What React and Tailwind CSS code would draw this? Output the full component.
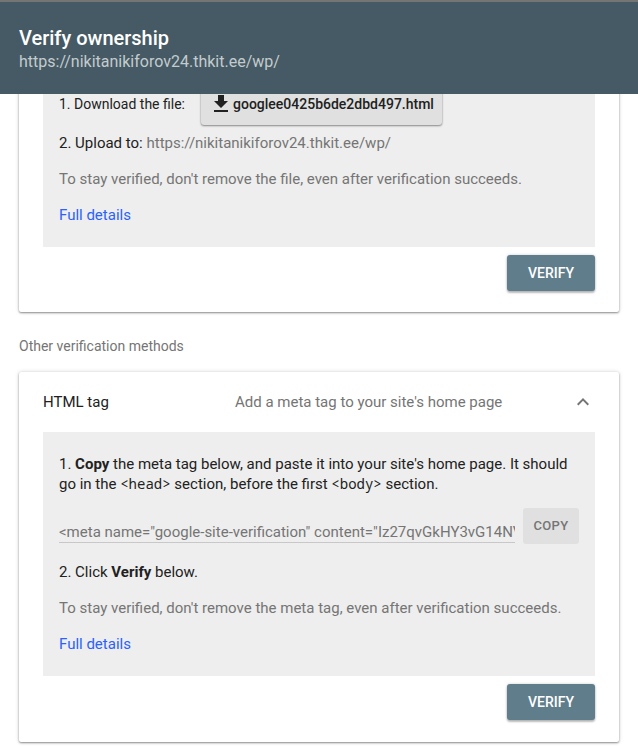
const CardFooter = () => (
  <div className="flex justify-end pt-2">
    <button
      type="button"
      className="h-9 w-22 rounded-[3px] bg-[#607d8b] pb-px text-sm font-medium text-white shadow-[0_2px_2px_rgba(0,0,0,0.24),0_0_3px_rgba(0,0,0,0.2)]"
    >
      VERIFY
    </button>
  </div>
);

const Card = ({ children }) => (
  <section className="rounded-[2px] bg-white px-6 shadow-[0_1px_2px_rgba(0,0,0,0.4),0_0_4px_rgba(0,0,0,0.16)]">
    {children}
  </section>
);

const DetailsLink = () => (
  <a href="#details" className="self-start text-[#2962ff]">
    Full details
  </a>
);

const Code = ({ children }) => (
  <code className="font-['Noto_Sans_Mono','DejaVu_Sans_Mono',monospace] text-sm leading-none">{children}</code>
);

const DownloadIcon = () => (
  <svg viewBox="0 0 14 17" className="h-[17px] w-[14px] shrink-0" fill="currentColor" aria-hidden="true">
    <path d="M4 0h6v6h4l-7 7-7-7h4zM0 15h14v2H0z" />
  </svg>
);

const ChevronUp = () => (
  <svg viewBox="0 0 24 24" className="size-6" fill="currentColor" aria-hidden="true">
    <path d="M12 8l-6 6 1.41 1.41L12 10.83l4.59 4.58L18 14z" />
  </svg>
);

const metaTag =
  '<meta name="google-site-verification" content="Iz27qvGkHY3vG14NV" />';

const App = () => {
  return (
    <div className="bg-white font-['Roboto',sans-serif] text-[15px] leading-5 text-[#212121]">
      <header className="relative z-10 border-t-2 border-[#757575] bg-[#455a64] px-[19px] pt-6 pb-[21px]">
        <h1 className="text-xl leading-6 font-medium text-white">Verify ownership</h1>
        <p className="text-base leading-[23px] text-[#c4cbce]">https://nikitanikiforov24.thkit.ee/wp/</p>
      </header>

      {/* the first card is scrolled partly under the header */}
      <main className="-mt-3 px-[19px] pb-[5px]">
        <Card>
          <div className="flex flex-col gap-4 bg-[#eee] px-4 pb-[22px]">
            <div className="-mb-2 flex items-center gap-4 text-sm">
              <span>1. Download the file:</span>
              <button
                type="button"
                className="flex h-[43px] items-center gap-[5px] rounded-[3px] bg-[#e0e0e0] pr-2 pl-[13px] font-medium shadow-[0_1px_2px_rgba(0,0,0,0.4),0_0_2px_rgba(0,0,0,0.16)]"
              >
                <DownloadIcon />
                googlee0425b6de2dbd497.html
              </button>
            </div>
            <p>
              2. Upload to: <span className="text-[#757575]">https://nikitanikiforov24.thkit.ee/wp/</span>
            </p>
            <p className="text-[#757575]">
              To stay verified, don't remove the file, even after verification succeeds.
            </p>
            <DetailsLink />
          </div>
          <CardFooter />
          <div className="h-[21px]" />
        </Card>

        <h2 className="pt-6 pb-4 text-sm leading-5 text-[#757575]">Other verification methods</h2>

        <Card>
          <button type="button" aria-expanded="true" className="flex h-[60px] w-full items-center text-left">
            <span className="w-48 shrink-0">HTML tag</span>
            <span className="flex-1 text-[#757575]">Add a meta tag to your site's home page</span>
            <span className="text-[#757575]">
              <ChevronUp />
            </span>
          </button>

          <div className="flex flex-col gap-4 bg-[#eee] px-4 py-[22px]">
            <p>
              1. <b>Copy</b> the meta tag below, and paste it into your site's home page. It should go in the{' '}
              <Code>&lt;head&gt;</Code> section, before the first <Code>&lt;body&gt;</Code> section.
            </p>
            <div className="-mt-0.5 mb-0.5 flex items-end gap-2">
              <input
                type="text"
                readOnly
                aria-label="Meta tag"
                value={metaTag}
                className="mb-px h-[22px] min-w-0 flex-1 border-b border-[#c8c8c8] bg-transparent text-[#757575] outline-none"
              />
              <button
                type="button"
                className="h-9 w-14 rounded-[3px] bg-[#e0e0e0] text-[13px] font-medium tracking-wide text-[#757575]"
              >
                COPY
              </button>
            </div>
            <p>
              2. Click <b>Verify</b> below.
            </p>
            <p className="text-[#757575]">
              To stay verified, don't remove the meta tag, even after verification succeeds.
            </p>
            <DetailsLink />
          </div>
          <CardFooter />
          <div className="h-[22px]" />
        </Card>
      </main>
    </div>
  );
};

export default App;
